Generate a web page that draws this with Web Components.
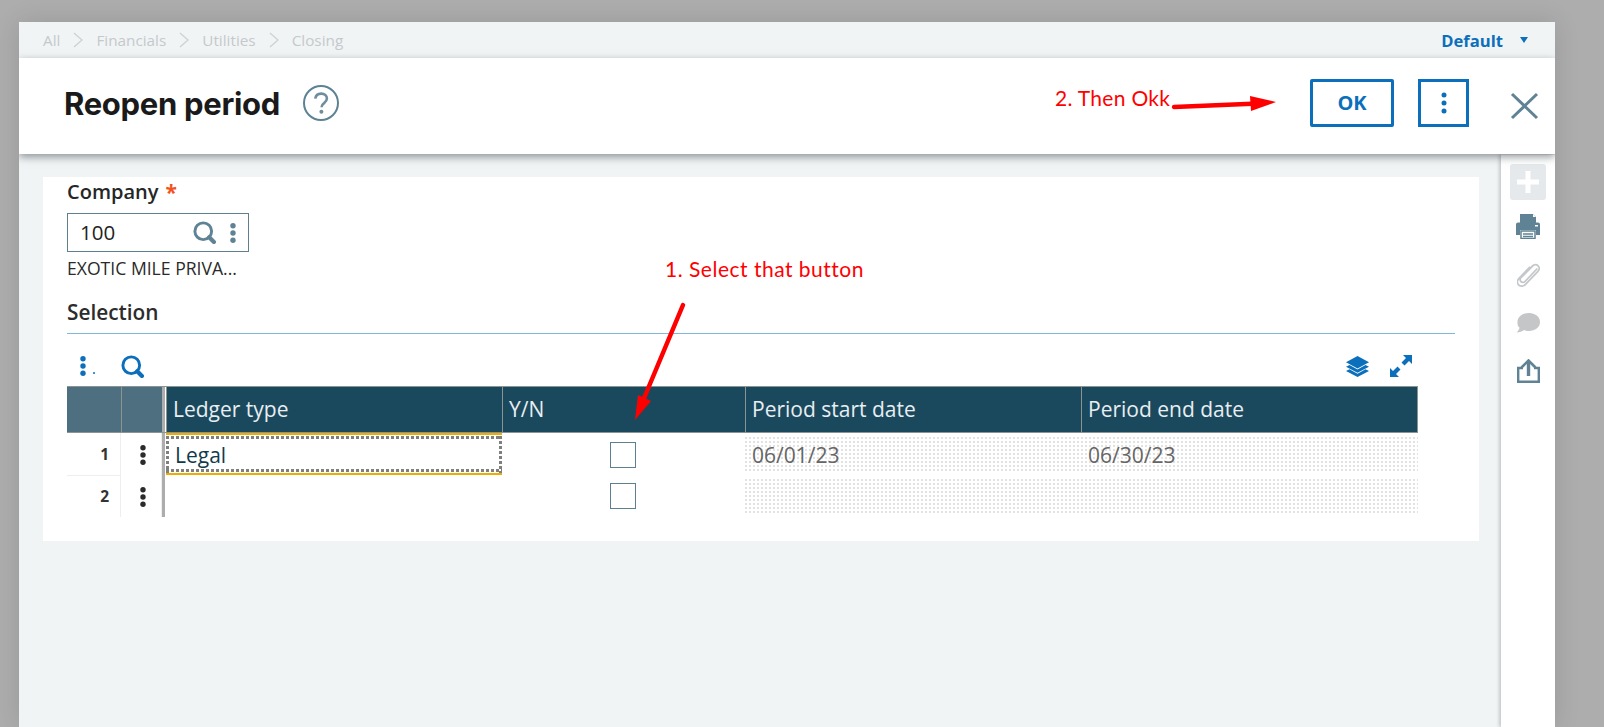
<!DOCTYPE html>
<html><head><meta charset="utf-8">
<style>
html,body{margin:0;height:727px;overflow:hidden}
body{background:#adadad;font-family:"Open Sans",sans-serif;}
</style></head>
<body>
<app-window>
  <crumb-bar slot="crumbs"></crumb-bar>
  <page-header slot="header"></page-header>
  <form-panel slot="panel"></form-panel>
  <side-rail slot="rail"></side-rail>
</app-window>
<note-layer></note-layer>
<script>
const def=(name,html)=>customElements.define(name,class extends HTMLElement{
  constructor(){super();this.attachShadow({mode:'open'}).innerHTML=html;}
});
def('app-window',`<style>
:host{display:grid;grid-template-rows:36px 96px 573px;grid-template-columns:1fr 54px;margin:22px 49px 0 19px;height:705px;background:#f1f4f5;box-shadow:0 0 24px rgba(0,0,0,.12);overflow:hidden}
.a{grid-column:1/3;display:block}
.b{grid-column:1/3;display:block;position:relative;z-index:1;box-shadow:0 3px 8px rgba(60,70,75,.55)}
.c{display:block;padding:23px 22px 0 24px;min-width:0}
</style>
<div class="a"><slot name="crumbs"></slot></div>
<div class="b"><slot name="header"></slot></div>
<div class="c"><slot name="panel"></slot></div>
<div><slot name="rail"></slot></div>`);
def('crumb-bar',`<style>
:host{display:flex;align-items:center;height:36px;padding-left:24px;font-size:15.3px;color:#c4c9cc}
span{display:block}
svg{display:block;margin:0 13px}
.r{margin-left:auto;display:flex;align-items:center;color:#0b6fbb;font-weight:700;font-size:16.6px;padding-right:27px}
.r svg{margin:0 0 0 17px}
</style>
<span>All</span><svg width="10" height="16" viewBox="0 0 10 16"><path d="M1 1l8 7-8 7" fill="none" stroke="#cfd3d6" stroke-width="1.5"/></svg>
<span>Financials</span><svg width="10" height="16" viewBox="0 0 10 16"><path d="M1 1l8 7-8 7" fill="none" stroke="#cfd3d6" stroke-width="1.5"/></svg>
<span>Utilities</span><svg width="10" height="16" viewBox="0 0 10 16"><path d="M1 1l8 7-8 7" fill="none" stroke="#cfd3d6" stroke-width="1.5"/></svg>
<span>Closing</span>
<div class="r">Default<svg width="8" height="6" viewBox="0 0 8 6"><path d="M0 0h8L4 6z" fill="#0b6fbb"/></svg></div>`);
def('page-header',`<style>
:host{display:flex;align-items:center;height:96px;box-sizing:border-box;background:#fff;padding:0 0 6px 45px}
h1{margin:0;font:700 31px/1 Inter,sans-serif;letter-spacing:-.3px;color:#1a1a1a}
.help{margin-left:23px;display:block}
.ok{margin-left:auto;box-sizing:border-box;width:84px;height:48px;border:3px solid #0b6fbb;border-radius:2px;color:#0b6fbb;font:700 20px/42px "Open Sans",sans-serif;text-align:center}
.more{margin-left:24px;box-sizing:border-box;width:51px;height:48px;border:3px solid #0b6fbb;display:flex;align-items:center;justify-content:center}
.x{margin:6px 16px 0 41px;display:block}
</style>
<h1>Reopen period</h1>
<svg class="help" width="36" height="36" viewBox="0 0 36 36"><circle cx="18" cy="18" r="17" fill="none" stroke="#5d8294" stroke-width="2"/><path d="M12.3 13.6c.4-3.200 2.900-5 5.900-5 3.300 0 5.700 2 5.700 5 0 2.300-1.300 3.400-2.800 4.500-1.600 1.100-2.600 2-2.600 4.200" fill="none" stroke="#6f8d9c" stroke-width="2.600"/><circle cx="18.400" cy="26.700" r="2" fill="#6f8d9c"/></svg>
<div class="ok">OK</div>
<div class="more"><svg width="6" height="26" viewBox="0 0 6 26"><circle cx="3" cy="5" r="2.500" fill="#0b6fbb"/><circle cx="3" cy="13" r="2.500" fill="#0b6fbb"/><circle cx="3" cy="21" r="2.500" fill="#0b6fbb"/></svg></div>
<svg class="x" width="29" height="28" viewBox="0 0 29 28"><path d="M2 2l25 24M27 2L2 26" stroke="#5f8394" stroke-width="3" fill="none"/></svg>`);
def('search-ico',`<style>:host{display:block;line-height:0}svg{display:block}</style>
<svg width="23" height="23" viewBox="0 0 22 22"><circle cx="9.800" cy="9.800" r="8" fill="none" stroke="var(--c)" stroke-width="2.800"/><path d="M15.500 15.500l4.500 4.500" stroke="var(--c)" stroke-width="4" stroke-linecap="round"/></svg>`);
def('kebab-ico',`<style>:host{display:block;line-height:0}svg{display:block}</style>
<svg width="6" height="20" viewBox="0 0 6 20"><circle cx="3" cy="2.800" r="2.700" fill="var(--c)"/><circle cx="3" cy="10" r="2.700" fill="var(--c)"/><circle cx="3" cy="17.200" r="2.700" fill="var(--c)"/></svg>`);
def('form-panel',`<style>
:host{display:block;background:#fff;height:364px;padding:0 24px 0 24px;box-sizing:border-box;color:#222}
.lab{font:600 20px/24px "Open Sans",sans-serif;color:#262626;padding:3px 0 0 0;height:24px;display:flex}
.lab i{font:700 21px/24px "Open Sans",sans-serif;color:#f4511e;margin-left:7px;font-style:normal}
.inp{box-sizing:border-box;width:182px;height:39px;border:1px solid #5e7f90;margin-top:9px;display:flex;align-items:center;padding-left:12px;font-size:20.500px;color:#222;--c:#5f8394}
.inp span{flex:1;position:relative;top:-1px}
.inp kebab-ico{margin:0 12px 0 14px}
.desc{font-size:17.600px;line-height:22px;margin:5px 0 0 0;white-space:nowrap;color:#2a2a2a}
.sec{font:600 20.800px/24px "Open Sans",sans-serif;margin:21px 0 0 0;color:#2c2c2c}
.line{height:1px;background:#7fbadc;margin-top:9px}
.tools{display:flex;align-items:center;height:52px;padding-top:12px;box-sizing:border-box;--c:#0b6fbb}
.tools .k{margin-left:13px;position:relative}
.tools .k::after{content:"";position:absolute;left:13px;bottom:2px;width:2px;height:2px;background:#0b6fbb;border-radius:50%}
.tools search-ico{margin-left:35px}
.tools .layers{margin-left:auto;display:block}
.tools .exp{margin:0 43px 0 21px;display:block}
</style>
<div class="lab">Company<i>*</i></div>
<div class="inp"><span>100</span><search-ico></search-ico><kebab-ico></kebab-ico></div>
<div class="desc">EXOTIC MILE PRIVA...</div>
<div class="sec">Selection</div>
<div class="line"></div>
<div class="tools"><kebab-ico class="k"></kebab-ico><search-ico></search-ico>
<svg class="layers" width="23" height="21" viewBox="0 0 23 21"><path d="M11.500 0L23 6.200 11.500 12.400 0 6.200z" fill="#0b6fbb"/><path d="M3.500 9L11.500 13.500 19.500 9 23 10.800 11.500 16.800 0 10.800z" fill="#0b6fbb"/><path d="M3.500 13.200L11.500 17.700 19.500 13.200 23 15 11.500 21 0 15z" fill="#0b6fbb"/></svg>
<svg class="exp" width="22" height="22" viewBox="0 0 22 22"><path d="M13 0h9v9l-3-3-4.500 4.500-3-3L16 3zM0 22v-9l3 3 4.500-4.500 3 3L6 19l3 3z" fill="#0b6fbb"/></svg></div>
<data-grid></data-grid>`);
def('data-grid',`<style>
:host{display:block;width:1351px;position:relative}
.row{display:grid;grid-template-columns:54px 41px 3px 1px 336px 243px 336px 337px}
.head{height:47px;box-sizing:border-box;border-top:1px solid #8a9490;border-bottom:1px solid #8a9490;color:#e8eef1;font-size:21px}
.head>div{background:#1a495d;display:flex;align-items:center;padding:0 0 2px 6px;box-sizing:border-box;border-left:1px solid #8a9490;white-space:nowrap}
.head .l{background:#4e6f7f;padding:0;border-left:1px solid #8a9490}
.head .s{background:#adadad;padding:0;border:0}
.head .g{background:#fff;padding:0;border:0}
.head .first{border-left:0}
.head>div:last-child{border-right:1px solid #8a9490}
.r{height:42px;color:#222}
.num{font:700 15.500px/42px "Open Sans",sans-serif;color:#333;text-align:right;padding-right:11px;border-right:1px solid #eee;border-bottom:1px solid #eee;box-sizing:border-box}
.r:last-child .num{border-bottom:0}
.kc{display:flex;align-items:center;justify-content:center;--c:#2b2b2b;border-right:1px solid #eee;box-sizing:border-box;padding:1px 0 0 3px}
.sep{background:#adadad}
.focus{box-sizing:border-box;height:42px;border-top:2px solid #f0ac00;border-bottom:2px solid #f0ac00;position:relative;font-size:21px;line-height:40px;padding-left:9px;color:#123a4d;background-image:linear-gradient(90deg,#7f7f7f 3px,transparent 3px,transparent 5px),linear-gradient(90deg,#7f7f7f 3px,transparent 3px,transparent 5px),linear-gradient(#7f7f7f 3px,transparent 3px,transparent 5px),linear-gradient(#7f7f7f 3px,transparent 3px,transparent 5px);background-size:5px 3px,5px 3px,3px 5px,3px 5px;background-position:0 1px,0 calc(100% - 1px),0 1px,100% 1px;background-repeat:repeat-x,repeat-x,repeat-y,repeat-y;background-origin:padding-box;background-clip:padding-box}
.cb{display:flex;align-items:center;justify-content:center;padding-right:1px;box-sizing:border-box}
.cb i{display:block;width:26px;height:26px;box-sizing:border-box;border:1px solid #5e7f90}
.d{margin:4px 0;background-color:#e2e2e2;background-image:linear-gradient(90deg,transparent 2px,#fff 2px),linear-gradient(transparent 2px,#fff 2px);background-size:4px 4px;font-size:21px;line-height:36px;padding-left:7px;color:#666;box-sizing:border-box;height:34px}
</style>
<div class="row head"><div class="l first"></div><div class="l"></div><div class="s"></div><div class="g"></div><div>Ledger type</div><div>Y/N</div><div>Period start date</div><div>Period end date</div></div>
<div class="row r"><div class="num">1</div><div class="kc"><kebab-ico></kebab-ico></div><div class="sep"></div><div></div><div class="focus">Legal</div><div class="cb"><i></i></div><div class="d">06/01/23</div><div class="d">06/30/23</div></div>
<div class="row r"><div class="num">2</div><div class="kc"><kebab-ico></kebab-ico></div><div class="sep"></div><div></div><div></div><div class="cb"><i></i></div><div class="d"></div><div class="d"></div></div>`);
def('side-rail',`<style>
:host{display:flex;flex-direction:column;align-items:center;height:573px;background:#fff;border-top:1px solid #e4e6e8;box-sizing:border-box;box-shadow:-2px 0 3px rgba(70,80,85,.25);padding-top:9px;position:relative}
.plus{width:36px;height:36px;border-radius:3px;background:#e5e9eb;display:flex;align-items:center;justify-content:center}
svg{display:block}
</style>
<div class="plus"><svg width="24" height="24" viewBox="0 0 24 24"><path d="M12 1v22M1 12h22" stroke="#fff" stroke-width="5"/></svg></div>
<svg style="margin-top:14px" width="24" height="25" viewBox="0 0 24 25"><path d="M4 0h13l3 3v6H4z" fill="#5f8394"/><path d="M17 0v3h3z" fill="#fff"/><path d="M2 8.500h20a2 2 0 012 2V21h-4v-5H4v5H0V10.500a2 2 0 012-2z" fill="#5f8394"/><rect x="19" y="11" width="3" height="1.500" fill="#fff"/><path d="M5 17h14v7.500H5z" fill="#fff" stroke="#5f8394" stroke-width="1.500"/><path d="M7 20h10M7 22.500h10" stroke="#5f8394" stroke-width="1.500"/></svg>
<svg style="margin-top:24px" width="23" height="25" viewBox="0 0 23 25"><path d="M20.300 5.500L8 18.500c-1.300 1.400-3.200 1-4 .2-.9-.9-1.300-2.700 0-4L15.500 3c1.900-1.900 4.300-1.500 5.600-.2 1.400 1.400 1.500 3.800-.2 5.500L8.500 21.300c-2.500 2.600-5.400 2-6.900.5-1.500-1.500-1.700-4.200.4-6.500L13 3.800" fill="none" stroke="#c5c8ca" stroke-width="1.800"/></svg>
<svg style="margin-top:25px" width="24" height="20" viewBox="0 0 24 20"><path d="M13 0c6 0 11 3.500 11 9s-5 9-11 9c-2 0-3.600-.4-5-1-1.800 1.300-4.500 2.500-7.500 2.500 1.500-1.200 2.700-3 3-4.700C1.400 13.200 1.500 11 1.500 9 1.500 3.500 7 0 13 0z" fill="#c4c6c8"/></svg>
<svg style="margin-top:26px" width="23" height="24" viewBox="0 0 23 24"><path d="M6 9H1.200v13.800h20.600V9H17" fill="none" stroke="#5f8394" stroke-width="2.400"/><path d="M11.500 2v15" stroke="#5f8394" stroke-width="3.400"/><path d="M4.500 8.500l7-7 7 7" fill="none" stroke="#5f8394" stroke-width="2.600"/></svg>`);
def('note-layer',`<style>
:host{display:block;position:absolute;z-index:5;left:0;top:0;width:1604px;height:727px;pointer-events:none;color:#ff0000;font:400 21px/26px Lato,sans-serif}
span{position:absolute;white-space:nowrap}
svg{position:absolute;left:0;top:0}
</style>
<span style="left:1055px;top:85px;letter-spacing:.3px">2. Then Okk</span>
<span style="left:665px;top:256px;letter-spacing:.5px">1. Select that button</span>
<svg width="1604" height="727"><path d="M1174 107L1252 103.700" stroke="#f00" stroke-width="4.500" stroke-linecap="round"/><path d="M1250 96L1276 102 1251 111z" fill="#f00"/><path d="M683 305L642 403" stroke="#f00" stroke-width="4.500" stroke-linecap="round"/><path d="M635 420L638 395 651 401z" fill="#f00"/></svg>`);
</script>
</body></html>
